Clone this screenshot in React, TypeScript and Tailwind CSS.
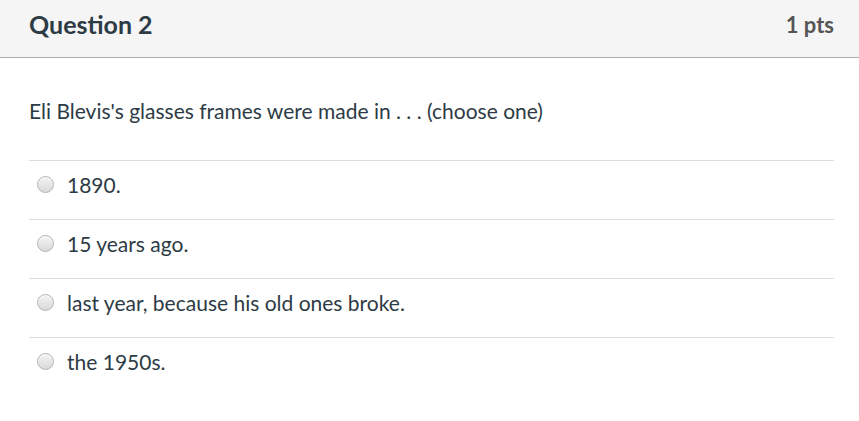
import React from "react";

const answers = ["1890.", "15 years ago.", "last year, because his old ones broke.", "the 1950s."];

function Radio() {
  return (
    <span className="inline-block w-[17px] h-[17px] rounded-full border border-[#b4b4b4] bg-gradient-to-b from-[#f4f4f4] to-[#d9d9d9] shadow-[inset_0_1px_1px_rgba(255,255,255,0.8)] shrink-0" />
  );
}

export default function App() {
  return (
    <div className="w-[859px] h-[421px] bg-white font-['Lato',sans-serif] text-[#2d3b45]">
      <div className="h-[58px] bg-[#f5f5f5] border-b border-[#adadad] flex items-center justify-between pl-[29px] pr-[25px] pb-[8px]">
        <span className="text-[25px] font-bold">Question 2</span>
        <span className="text-[22px] font-bold text-[#555555]">1 pts</span>
      </div>
      <div className="pl-[29px] pr-[25px]">
        <div className="pt-[39px] pb-[36px] text-[21px] leading-[27px]">
          Eli Blevis's glasses frames were made in . . . (choose one)
        </div>
        {answers.map((a) => (
          <div key={a} className="border-t border-[#dddddd] h-[59px] pt-[10px]">
            <div className="flex items-center h-[27px] pl-[8px] gap-[13px] text-[21px] leading-[27px]">
              <Radio />
              <span>{a}</span>
            </div>
          </div>
        ))}
      </div>
    </div>
  );
}
